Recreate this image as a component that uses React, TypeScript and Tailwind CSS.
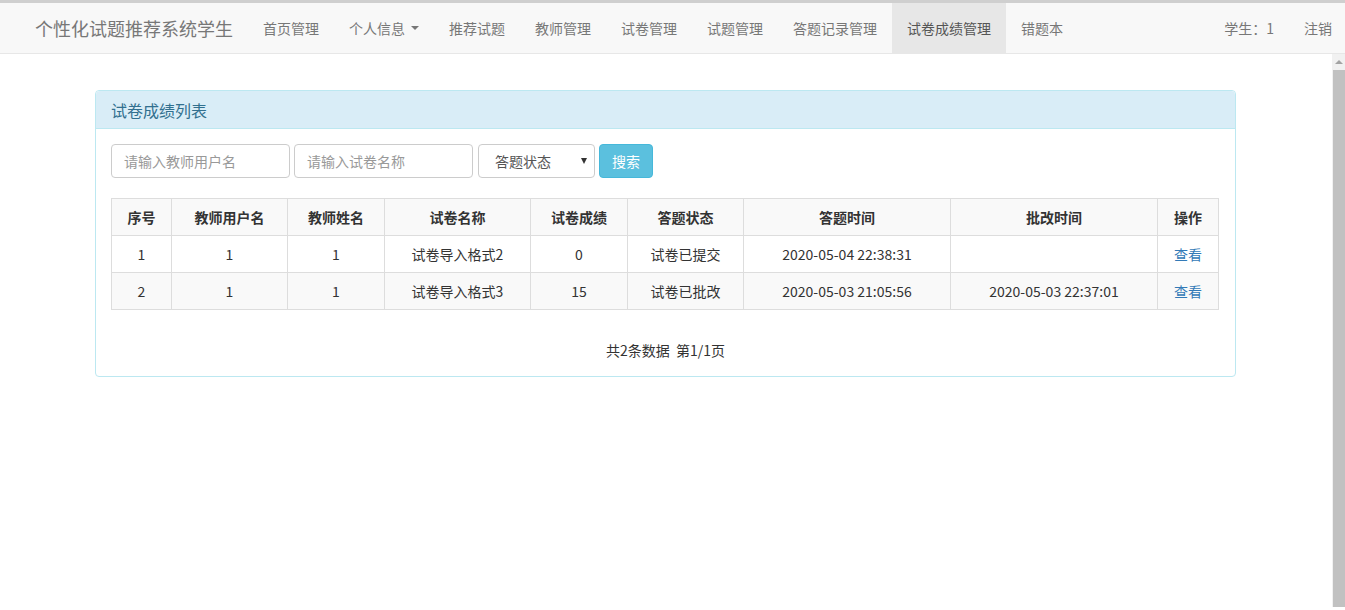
import React from 'react';

const navItems = ['首页管理', '个人信息', '推荐试题', '教师管理', '试卷管理', '试题管理', '答题记录管理', '试卷成绩管理', '错题本'];

const columns = [
  { title: '序号', w: 'w-[60px]' },
  { title: '教师用户名', w: 'w-[116px]' },
  { title: '教师姓名', w: 'w-[97px]' },
  { title: '试卷名称', w: 'w-[146px]' },
  { title: '试卷成绩', w: 'w-[97px]' },
  { title: '答题状态', w: 'w-[116px]' },
  { title: '答题时间', w: 'w-[207px]' },
  { title: '批改时间', w: 'w-[207px]' },
  { title: '操作', w: '' },
];

const rows = [
  ['1', '1', '1', '试卷导入格式2', '0', '试卷已提交', '2020-05-04 22:38:31', ''],
  ['2', '1', '1', '试卷导入格式3', '15', '试卷已批改', '2020-05-03 21:05:56', '2020-05-03 22:37:01'],
];

export default function App() {
  return (
    <div
      className="h-[610px] w-[1345px] overflow-hidden bg-white text-[14px] text-[#333]"
      style={{ fontFamily: '"Noto Sans CJK SC", "Liberation Sans", sans-serif' }}
    >
      {/* Navbar */}
      <div className="flex h-[54px] items-stretch border-t-[3px] border-b border-t-[#cfcfcf] border-b-[#e7e7e7] bg-[#f8f8f8]">
        <div className="flex items-center pl-[35px] pr-[15px] text-[18px] text-[#777]">个性化试题推荐系统学生</div>
        <div className="flex">
          {navItems.map((item) => (
            <div
              key={item}
              className={`flex items-center px-[15px] ${item === '试卷成绩管理' ? 'bg-[#e7e7e7] text-[#555]' : 'text-[#777]'}`}
            >
              {item}
              {item === '个人信息' && (
                <span className="ml-[6px] inline-block h-0 w-0 border-x-[4px] border-t-[4px] border-x-transparent border-t-[#777]" />
              )}
            </div>
          ))}
        </div>
        <div className="ml-auto flex">
          <div className="flex items-center px-[15px] text-[#777]">学生：1</div>
          <div className="flex items-center pl-[15px] pr-[13px] text-[#777]">注销</div>
        </div>
      </div>

      <div className="flex h-[553px]">
        {/* Content */}
        <div className="flex-1 pt-[36px]">
          <div className="ml-[95px] w-[1141px] rounded border border-[#bce8f1]">
            <div className="flex h-[38px] items-center rounded-t border-b border-[#bce8f1] bg-[#d9edf7] px-[15px] text-[16px] text-[#31708f]">
              试卷成绩列表
            </div>
            <div className="p-[15px]">
              <div className="flex gap-[4px]">
                <input
                  placeholder="请输入教师用户名"
                  className="h-[34px] w-[179px] rounded border border-[#ccc] px-[12px] text-[14px] placeholder:text-[#999]"
                />
                <input
                  placeholder="请输入试卷名称"
                  className="h-[34px] w-[179px] rounded border border-[#ccc] px-[12px] text-[14px] placeholder:text-[#999]"
                />
                <div className="relative ml-[1px] flex h-[34px] w-[117px] items-center rounded border border-[#ccc] pl-[16px] text-[#555]">
                  答题状态
                  <span className="absolute right-[7px] top-[13px] h-0 w-0 border-x-[3.5px] border-t-[6px] border-x-transparent border-t-[#333]" />
                </div>
                <button className="flex h-[34px] w-[54px] items-center justify-center rounded border border-[#46b8da] bg-[#5bc0de] text-white">
                  搜索
                </button>
              </div>

              <table className="mt-[20px] w-[1108px] border-collapse border border-[#ddd] text-center">
                <thead>
                  <tr className="h-[37px] bg-[#f9f9f9]">
                    {columns.map((c) => (
                      <th key={c.title} className={`border border-[#ddd] font-bold text-[#333] ${c.w}`}>
                        {c.title}
                      </th>
                    ))}
                  </tr>
                </thead>
                <tbody>
                  {rows.map((r, i) => (
                    <tr key={i} className={`h-[37px] ${i % 2 === 1 ? 'bg-[#f9f9f9]' : 'bg-white'}`}>
                      {r.map((cell, j) => (
                        <td key={j} className="border border-[#ddd]">
                          {cell}
                        </td>
                      ))}
                      <td className="border border-[#ddd] text-[#337ab7]">查看</td>
                    </tr>
                  ))}
                </tbody>
              </table>

              <div className="mt-[30px] text-center">共2条数据&nbsp;&nbsp;第1/1页</div>
            </div>
          </div>
        </div>

        {/* Scrollbar */}
        <div className="flex w-[13px] flex-col bg-[#f1f1f1]">
          <div className="flex h-[16px] items-center justify-center">
            <span className="h-0 w-0 border-x-[4px] border-b-[4px] border-x-transparent border-b-[#a3a3a3]" />
          </div>
          <div className="mx-auto w-[12px] flex-1 bg-[#c1c1c1]" />
        </div>
      </div>
    </div>
  );
}
